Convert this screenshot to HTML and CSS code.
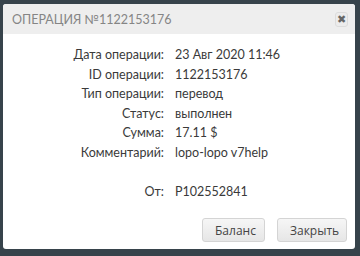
FILE: index.html
```html
<!DOCTYPE html>
<html lang="ru">
<head>
<meta charset="utf-8">
<link rel="stylesheet" href="styles.css">
</head>
<body>
<div class="dialog">
  <div class="header">
    <span class="title">Операция №1122153176</span>
    <button class="close">&#x2716;</button>
  </div>
  <div class="content">
    <div class="rows">
      <div class="label">Дата операции:</div><div class="value">23 Авг 2020 11:46</div>
      <div class="label">ID операции:</div><div class="value">1122153176</div>
      <div class="label">Тип операции:</div><div class="value">перевод</div>
      <div class="label">Статус:</div><div class="value">выполнен</div>
      <div class="label">Сумма:</div><div class="value">17.11 $</div>
      <div class="label">Комментарий:</div><div class="value">lopo-lopo v7help</div>
      <div class="label">&nbsp;</div><div class="value">&nbsp;</div>
      <div class="label">От:</div><div class="value">P102552841</div>
    </div>
  </div>
  <div class="footer">
    <button class="btn">Баланс</button>
    <button class="btn">Закрыть</button>
  </div>
</div>
</body>
</html>
```
FILE: styles.css
```css
html, body {
  margin: 0;
  padding: 0;
  background: #37434b;
  height: 256px;
  overflow: hidden;
}
.dialog {
  margin: 4px 0 0 3px;
  width: 352px;
  height: 245px;
  background: #fff;
  border-radius: 3px;
  display: flex;
  flex-direction: column;
  overflow: hidden;
}
.header {
  height: 30px;
  background: #eeeeee;
  display: flex;
  align-items: center;
  justify-content: space-between;
  padding: 0 7px 0 9px;
  flex: none;
}
.title {
  font-family: Lato, sans-serif;
  font-size: 12.5px;
  letter-spacing: 0;
  text-transform: uppercase;
  color: #858585;
}
.close {
  width: 13px;
  height: 15px;
  padding: 0;
  border: 1px solid #dcdcdc;
  border-radius: 3px;
  background: #ececec;
  color: #666;
  font-size: 11px;
  line-height: 13px;
  font-family: "DejaVu Sans", sans-serif;
  display: flex;
  align-items: center;
  justify-content: center;
}
.content {
  padding-top: 11px;
  flex: none;
}
.rows {
  display: grid;
  grid-template-columns: 161px 1fr;
  column-gap: 11px;
  font-family: Lato, sans-serif;
  font-size: 12.5px;
  line-height: 19.5px;
  color: #3a3a3a;
}
.label { text-align: right; }
.footer {
  display: flex;
  justify-content: flex-end;
  gap: 12px;
  padding: 17px 8px 0 0;
}
.btn {
  height: 24px;
  border: 1px solid #d4d4d4;
  border-radius: 3px;
  background: linear-gradient(#f6f6f6, #e6e6e6);
  font-family: "Open Sans", sans-serif;
  font-size: 12px;
  color: #444;
  padding: 0 12px;
}
.btn:first-child { width: 63px; }
.btn:last-child { width: 70px; }
```
